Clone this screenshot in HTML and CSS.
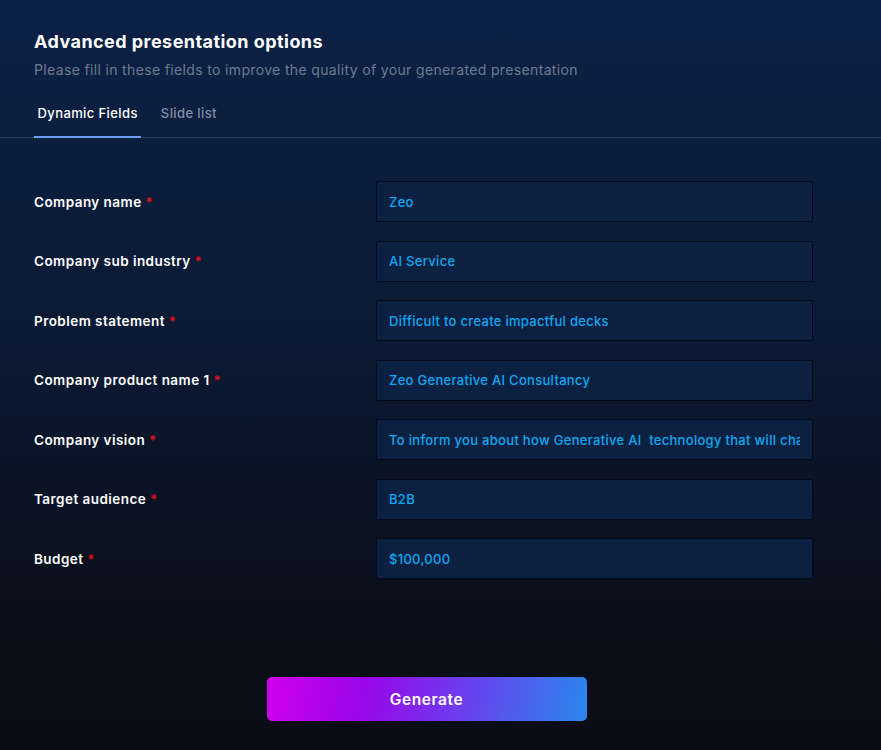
FILE: index.html
```html
<!DOCTYPE html>
<html lang="en">
<head>
    <meta charset="UTF-8">
    <meta name="viewport" content="width=device-width, initial-scale=1.0">
    <title>Advanced presentation options</title>
    <link rel="stylesheet" href="styles.css">
</head>
<body>
    <div class="header">
        <h1>Advanced presentation options</h1>
        <p class="subtitle">Please fill in these fields to improve the quality of your generated presentation</p>
    </div>

    <div class="tabs">
        <div class="tab active">Dynamic Fields</div>
        <div class="tab">Slide list</div>
    </div>

    <form class="fields">
        <label for="companyName">Company name <span class="req">*</span></label>
        <input type="text" id="companyName" value="Zeo">

        <label for="subIndustry">Company sub industry <span class="req">*</span></label>
        <input type="text" id="subIndustry" value="AI Service">

        <label for="problem">Problem statement <span class="req">*</span></label>
        <input type="text" id="problem" value="Difficult to create impactful decks">

        <label for="product">Company product name 1 <span class="req">*</span></label>
        <input type="text" id="product" value="Zeo Generative AI Consultancy">

        <label for="vision">Company vision <span class="req">*</span></label>
        <input type="text" id="vision" value="To inform you about how Generative AI  technology that will change the way you work">

        <label for="audience">Target audience <span class="req">*</span></label>
        <input type="text" id="audience" value="B2B">

        <label for="budget">Budget <span class="req">*</span></label>
        <input type="text" id="budget" value="$100,000">

        <div class="actions">
            <button type="button" id="generate">Generate</button>
        </div>
    </form>
</body>
</html>
```

FILE: styles.css
```css
* {
    box-sizing: border-box;
}
html, body {
    height: 100%;
}
body {
    font-family: 'Inter', 'Noto Sans', sans-serif;
    background: linear-gradient(180deg, #0b2146 0%, #0b1a34 45%, #0a0f1b 80%, #0a0d16 100%);
    color: #fff;
    margin: 0;
    padding: 0;
    min-height: 750px;
}
.header {
    padding: 30px 34px 0;
}
h1 {
    font-size: 18px;
    font-weight: 700;
    margin: 0;
    line-height: 24px;
    letter-spacing: 0.45px;
}
.subtitle {
    font-size: 14px;
    color: #6f7b91;
    margin: 6px 0 0;
    line-height: 20px;
    letter-spacing: 0.35px;
}
.tabs {
    display: flex;
    gap: 16px;
    padding: 0 34px;
    margin-top: 22px;
    border-bottom: 1px solid #2b3b5a;
}
.tab {
    font-size: 13px;
    font-weight: 500;
    color: #858ea2;
    padding: 3px 3.5px 15px;
    border-bottom: 2px solid transparent;
    margin-bottom: -1px;
    letter-spacing: 0.4px;
}
.tab.active {
    color: #fff;
    border-bottom-color: #6d9cff;
}
.fields {
    display: grid;
    grid-template-columns: 342px 437px;
    row-gap: 18.5px;
    align-items: center;
    padding: 43px 0 0 34px;
}
label {
    font-size: 13.5px;
    font-weight: 600;
    color: #fff;
    letter-spacing: 0.45px;
}
.req {
    color: #e0101c;
}
input[type="text"] {
    width: 100%;
    height: 41px;
    padding: 0 12px;
    background: #0c2141;
    border: 1px solid #050b16;
    border-radius: 2px;
    color: #0ea8f2;
    font-family: inherit;
    font-size: 13px;
    font-weight: 500;
    letter-spacing: 0.3px;
    outline: none;
}
.actions {
    grid-column: 1 / -1;
    width: 785px;
    display: flex;
    justify-content: center;
    margin-top: 79.5px;
}
button {
    width: 320px;
    height: 44px;
    border: none;
    border-radius: 5px;
    background: linear-gradient(100deg, #d000ee 0%, #9a06ea 30%, #6d3ced 60%, #2a88ef 100%);
    color: #fff;
    font-family: inherit;
    font-size: 15.5px;
    font-weight: 600;
    letter-spacing: 0.6px;
    cursor: pointer;
}
```
